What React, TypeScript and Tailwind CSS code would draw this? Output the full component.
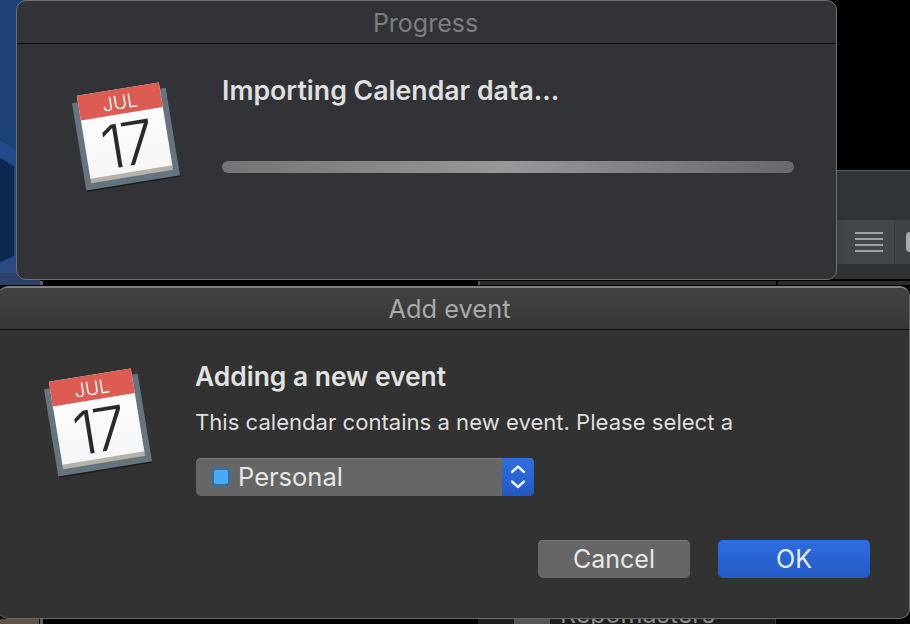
import React from 'react';

const sans = 'font-["Inter","Liberation_Sans",sans-serif]';

const CalendarIcon: React.FC<{ className?: string }> = ({ className }) => (
  <svg viewBox="0 0 130 130" className={className}>
    <defs>
      <linearGradient id="sheet" x1="0" y1="0" x2="0" y2="1">
        <stop offset="0" stopColor="#ffffff" />
        <stop offset="1" stopColor="#f6f6f6" />
      </linearGradient>
    </defs>
    <g transform="rotate(-9.3 65 65)">
      <rect x="18" y="29" width="94.5" height="88" fill="#151617" opacity="0.7" />
      <rect x="17.5" y="27" width="95" height="88.5" fill="#64757f" />
      <rect x="23.5" y="103" width="83" height="6" fill="#b5b2aa" />
      <rect x="23.5" y="20.5" width="83" height="84" fill="url(#sheet)" />
      <rect x="23.5" y="20.5" width="83" height="25" fill="#dc5c53" />
      <text x="65" y="40.5" textAnchor="middle" fontSize="19" fontFamily="Inter, 'Liberation Sans', sans-serif" fontWeight="300" fill="#ffffff">
        JUL
      </text>
      <text x="64" y="98" textAnchor="middle" fontSize="60" fontFamily="Inter, 'Liberation Sans', sans-serif" fontWeight="300" letterSpacing="-4" fill="#2a2a2a">
        17
      </text>
    </g>
  </svg>
);

const Stepper: React.FC = () => (
  <svg viewBox="0 0 32 38" className="w-8 h-[38px]" fill="none" stroke="#eaf0fb" strokeWidth="2.4" strokeLinecap="round" strokeLinejoin="round">
    <path d="M10 14 L16 8.5 L22 14" />
    <path d="M10 23.5 L16 29 L22 23.5" />
  </svg>
);

// wallpaper sliver, a picture in the original
const Wallpaper: React.FC = () => (
  <svg viewBox="0 0 40 285" className="absolute left-0 top-0 w-[40px] h-[285px]">
    <rect width="40" height="285" fill="#1c4178" />
    <polygon points="0,140 40,165 40,270 0,272" fill="#234a88" />
    <polygon points="0,158 14,166 14,256 0,262" fill="#10284f" />
    <polygon points="0,262 40,252 40,285 0,285" fill="#2c4a80" />
    <rect y="273" width="40" height="12" fill="#2e4268" />
  </svg>
);

export default function App() {
  return (
    <div className={`relative w-[910px] h-[624px] overflow-hidden bg-black ${sans}`}>
      <Wallpaper />
      <div className="absolute left-[40px] top-[281px] w-[3px] h-[4px] bg-[#5a6068]" />

      {/* window behind: strips that show between and below the dialogs */}
      <div className="absolute left-[478px] top-[281px] w-[432px] h-[4px] flex bg-[#2a2b2d]">
        <div className="w-[2px] bg-[#55575a]" />
        <div className="ml-[296px] w-[2px] bg-black" />
      </div>
      <div className="absolute left-[478px] top-[600px] w-[298px] h-[24px] flex bg-[#1d1e20] border-r border-[#333]">
        <div className="ml-[36px] mt-[19px] w-[36px] h-[5px] bg-[#555558]" />
        <div className="ml-[10px] h-[24px] overflow-hidden text-[25px] leading-[29px] text-[#8c8c8c]">Repomasters</div>
      </div>

      {/* window behind, right edge */}
      <div className="absolute left-[790px] top-[170px] w-[120px] h-[110px] flex flex-col bg-[#2f3337] border-t border-[#5c6064]">
        <div className="h-[49px] bg-[#2f3437]" />
        <div className="h-[44px] flex bg-[#3f4347] pl-[54px] gap-px">
          <div className="w-[53px] flex flex-col gap-[4px] items-center justify-center bg-[#43474b] border-r border-[#36393d]">
            <div className="w-[28px] h-[2px] bg-[#a0a2a4]" />
            <div className="w-[28px] h-[2px] bg-[#a0a2a4]" />
            <div className="w-[28px] h-[2px] bg-[#a0a2a4]" />
            <div className="w-[28px] h-[2px] bg-[#a0a2a4]" />
          </div>
          <div className="ml-[10px] mt-[12px] w-[4px] h-[20px] rounded-l-sm bg-[#a9abad]" />
        </div>
        <div className="flex-1 bg-[#2f3336] border-b border-black" />
      </div>

      {/* Progress window */}
      <div className="absolute left-[16px] top-0 w-[821px] h-[280px] rounded-[10px] bg-[#323337] border border-[#6d6f72] flex flex-col overflow-hidden">
        <div className="h-[43px] shrink-0 pt-[3px] pr-[2px] flex items-center justify-center border-b border-[#0f0f10] text-[25px] text-[#7d7e80]">
          Progress
        </div>
        <div className="relative flex-1">
          <CalendarIcon className="absolute left-[43px] top-[24px] w-[130px] h-[130px]" />
          <div className="pl-[205px] pr-[42px] pt-[28px]">
            <div className="text-[26.7px] leading-[36px] font-semibold text-[#dfdfdf]">Importing Calendar data...</div>
            <div className="mt-[53px] h-3 rounded-md bg-gradient-to-r from-[#737476] via-[#97989a] to-[#67686c]" />
          </div>
        </div>
      </div>

      {/* Add event window */}
      <div className="absolute left-[-2px] top-[286px] w-[912px] h-[333px] rounded-[10px] bg-[#323232] border-t-2 border-b border-r border-t-[#808080] border-b-[#6a6a6a] border-r-[#6a6a6a] flex flex-col overflow-hidden">
        <div className="h-[42px] shrink-0 pt-[2px] pr-[8px] flex items-center justify-center border-b border-[#0d0d0d] bg-gradient-to-b from-[#424242] to-[#373737] text-[25.4px] text-[#a9a9a9]">
          Add event
        </div>
        <div className="relative flex-1">
          <CalendarIcon className="absolute left-[34px] top-[24px] w-[130px] h-[130px]" />
          <div className="pl-[197px] pt-[28px] pr-[39px]">
            <div className="text-[26.4px] leading-[36px] font-semibold text-[#e2e2e2]">Adding a new event</div>
            <div className="mt-[14px] text-[22.1px] leading-[28px] text-[#dedede] whitespace-nowrap">
              This calendar contains a new event. Please select a
            </div>
            <div className="mt-[22px] ml-px w-[338px] h-[38px] flex rounded-[5px] overflow-hidden bg-[#666666] shadow-[inset_0_1px_0_#7a7a7a]">
              <div className="flex-1 flex items-center pl-[16px] gap-[8px]">
                <div className="w-[18px] h-[18px] rounded-[4px] bg-[#4aaaf7] border-2 border-[#2f6ea6]" />
                <span className="text-[25.5px] text-[#e6e6e6]">Personal</span>
              </div>
              <div className="w-8 bg-gradient-to-b from-[#2f6fe0] to-[#2359c4]">
                <Stepper />
              </div>
            </div>
            <div className="mt-[44px] flex justify-end gap-[28px]">
              <button className="w-[152px] h-[38px] pt-[1px] rounded-[5px] bg-[#666666] shadow-[inset_0_1px_0_#7a7a7a] text-[25px] text-[#e6e6e6]">
                Cancel
              </button>
              <button className="w-[152px] h-[38px] pt-[1px] rounded-[5px] bg-gradient-to-b from-[#2e6ee0] to-[#2459c4] text-[25px] text-[#e9eefa]">
                OK
              </button>
            </div>
          </div>
        </div>
      </div>

      {/* sliver of the page below the dialogs */}
      <div className="absolute left-0 top-[619px] w-[39px] h-[5px] bg-[#5d5346]" />
      <div className="absolute left-[40px] top-[619px] w-[3px] h-[5px] bg-[#5a6068]" />
    </div>
  );
}
